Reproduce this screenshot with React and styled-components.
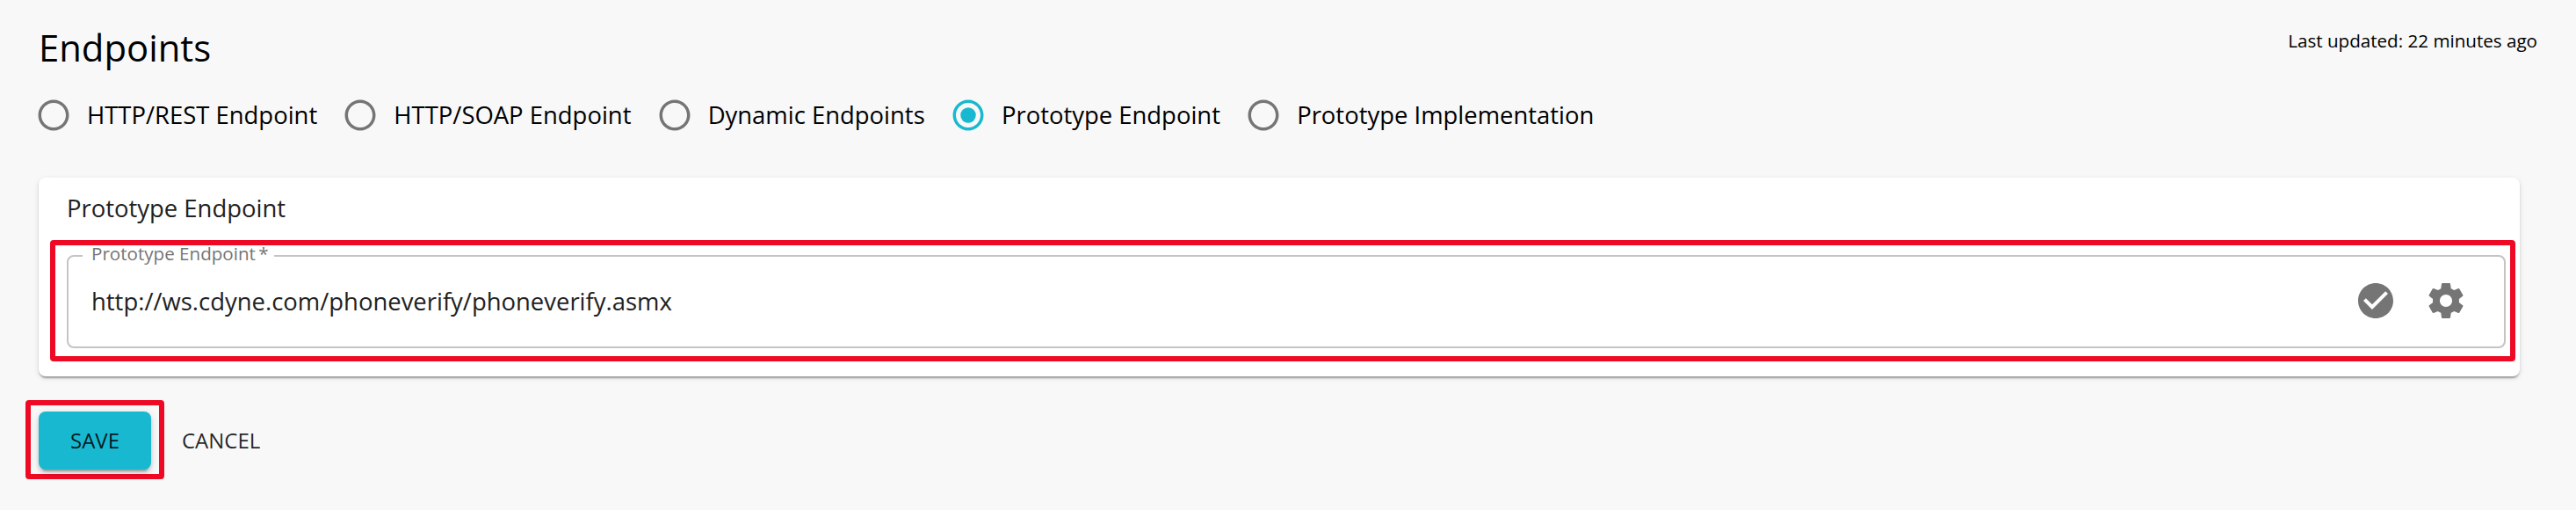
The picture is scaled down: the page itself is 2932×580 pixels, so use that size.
import React from "react";
import styled, { createGlobalStyle } from "styled-components";

const GlobalStyle = createGlobalStyle`
  * { box-sizing: border-box; }
  body {
    margin: 0;
    background: #f8f8f8;
    color: #000;
    font-family: "Open Sans", "Noto Sans", sans-serif;
    font-size: 27.45px;
  }
`;

const Page = styled.main`
  height: 580px;
  padding: 25px 44px 0;
`;

const Header = styled.header`
  display: flex;
  justify-content: space-between;
  align-items: flex-start;
  height: 75px;
`;

const Title = styled.h1`
  margin: 0;
  font-size: 41.8px;
  font-weight: 400;
  line-height: 58px;
`;

const Updated = styled.span`
  margin-top: 6px;
  font-size: 20.6px;
  line-height: 30px;
`;

const RadioGroup = styled.div`
  display: flex;
  gap: 28.2px;
  height: 102px;
  margin-left: -4px;
`;

const RadioOption = styled.label`
  display: flex;
  align-items: center;
  gap: 17px;
  height: 62px;
  line-height: 42px;
  white-space: nowrap;
`;

const RadioIcon = styled.svg`
  flex: none;
  width: 42px;
  height: 42px;
  fill: ${(p) => (p.$checked ? "#18b9d0" : "#757575")};
`;

const Card = styled.section`
  width: 2824px;
  height: 226px;
  padding: 14px 16px 0 32px;
  border-radius: 8px;
  background: #fff;
  color: #212121;
  box-shadow:
    0 4px 2px -2px rgba(0, 0, 0, 0.2),
    0 2px 2px 0 rgba(0, 0, 0, 0.14),
    0 2px 6px 0 rgba(0, 0, 0, 0.12);
`;

const CardTitle = styled.h2`
  margin: 0;
  font-size: inherit;
  font-weight: 400;
  line-height: 42px;
`;

const Highlight = styled.div`
  width: fit-content;
  border: 6px solid #ee0a24;
  border-radius: 4px;
`;

const FieldHighlight = styled(Highlight)`
  width: 2806px;
  height: 138px;
  margin: 15px 0 0 -19px;
  padding: 11px 5px 0 13px;
`;

const Field = styled.div`
  position: relative;
  display: flex;
  align-items: center;
  height: 106px;
  padding: 0 42px 0 26px;
  border: 2px solid #c4c4c4;
  border-radius: 8px;
`;

const FieldLabel = styled.label`
  position: absolute;
  left: 16px;
  top: -12px;
  width: 218px;
  padding-left: 10px;
  background: #fff;
  color: #757575;
  font-size: 20.6px;
  line-height: 16px;
  white-space: nowrap;
`;

const Url = styled.span`
  flex: 1;
  line-height: 38px;
`;

const FieldIcon = styled.svg`
  width: 48px;
  height: 48px;
  margin: 0 0 2px 32px;
  fill: #757575;
`;

const Actions = styled.footer`
  display: flex;
  align-items: center;
  margin: 27px 0 0 -15px;
`;

const SaveHighlight = styled(Highlight)`
  padding: 7px 9px 5px;
`;

const Button = styled.button`
  height: 66px;
  padding: 0;
  border: 0;
  border-radius: 8px;
  background: none;
  color: rgba(0, 0, 0, 0.87);
  font-family: inherit;
  font-size: 24px;
  line-height: 42px;
`;

const SaveButton = styled(Button)`
  display: block;
  width: 128px;
  background: #18b9d0;
  box-shadow:
    0 6px 2px -4px rgba(0, 0, 0, 0.2),
    0 4px 4px 0 rgba(0, 0, 0, 0.14),
    0 2px 10px 0 rgba(0, 0, 0, 0.12);
`;

const CancelButton = styled(Button)`
  margin: 2px 0 0 20px;
`;

const options = [
  "HTTP/REST Endpoint",
  "HTTP/SOAP Endpoint",
  "Dynamic Endpoints",
  "Prototype Endpoint",
  "Prototype Implementation",
];

function Radio({ label, checked }) {
  return (
    <RadioOption>
      <RadioIcon $checked={checked} viewBox="0 0 24 24">
        <path d="M12 2C6.48 2 2 6.48 2 12s4.48 10 10 10 10-4.48 10-10S17.52 2 12 2zm0 18c-4.42 0-8-3.58-8-8s3.58-8 8-8 8 3.58 8 8-3.58 8-8 8z" />
        {checked && <circle cx="12" cy="12" r="5" />}
      </RadioIcon>
      <span>{label}</span>
    </RadioOption>
  );
}

export default function App() {
  return (
    <>
      <GlobalStyle />
      <Page>
        <Header>
          <Title>Endpoints</Title>
          <Updated>Last updated: 22 minutes ago</Updated>
        </Header>
        <RadioGroup>
          {options.map((label) => (
            <Radio key={label} label={label} checked={label === "Prototype Endpoint"} />
          ))}
        </RadioGroup>
        <Card>
          <CardTitle>Prototype Endpoint</CardTitle>
          <FieldHighlight>
            <Field>
              <FieldLabel>Prototype Endpoint{"\u2009"}*</FieldLabel>
              <Url>http://ws.cdyne.com/phoneverify/phoneverify.asmx</Url>
              <FieldIcon viewBox="0 0 24 24">
                <path d="M12 2C6.48 2 2 6.48 2 12s4.48 10 10 10 10-4.48 10-10S17.52 2 12 2zm-2 15l-5-5 1.41-1.41L10 14.17l7.59-7.59L19 8l-9 9z" />
              </FieldIcon>
              <FieldIcon viewBox="0 0 24 24">
                <path d="M19.43 12.98c.04-.32.07-.64.07-.98s-.03-.66-.07-.98l2.11-1.65c.19-.15.24-.42.12-.64l-2-3.46c-.12-.22-.39-.3-.61-.22l-2.49 1c-.52-.4-1.08-.73-1.69-.98l-.38-2.65C14.46 2.18 14.25 2 14 2h-4c-.25 0-.46.18-.49.42l-.38 2.65c-.61.25-1.17.59-1.69.98l-2.49-1c-.23-.09-.49 0-.61.22l-2 3.46c-.13.22-.07.49.12.64l2.11 1.65c-.04.32-.07.65-.07.98s.03.66.07.98l-2.11 1.65c-.19.15-.24.42-.12.64l2 3.46c.12.22.39.3.61.22l2.49-1c.52.4 1.08.73 1.69.98l.38 2.65c.03.24.24.42.49.42h4c.25 0 .46-.18.49-.42l.38-2.65c.61-.25 1.17-.59 1.69-.98l2.49 1c.23.09.49 0 .61-.22l2-3.46c.12-.22.07-.49-.12-.64l-2.11-1.65zM12 15.5c-1.93 0-3.5-1.57-3.5-3.5s1.57-3.5 3.5-3.5 3.5 1.57 3.5 3.5-1.57 3.5-3.5 3.5z" />
              </FieldIcon>
            </Field>
          </FieldHighlight>
        </Card>
        <Actions>
          <SaveHighlight>
            <SaveButton>SAVE</SaveButton>
          </SaveHighlight>
          <CancelButton>CANCEL</CancelButton>
        </Actions>
      </Page>
    </>
  );
}
